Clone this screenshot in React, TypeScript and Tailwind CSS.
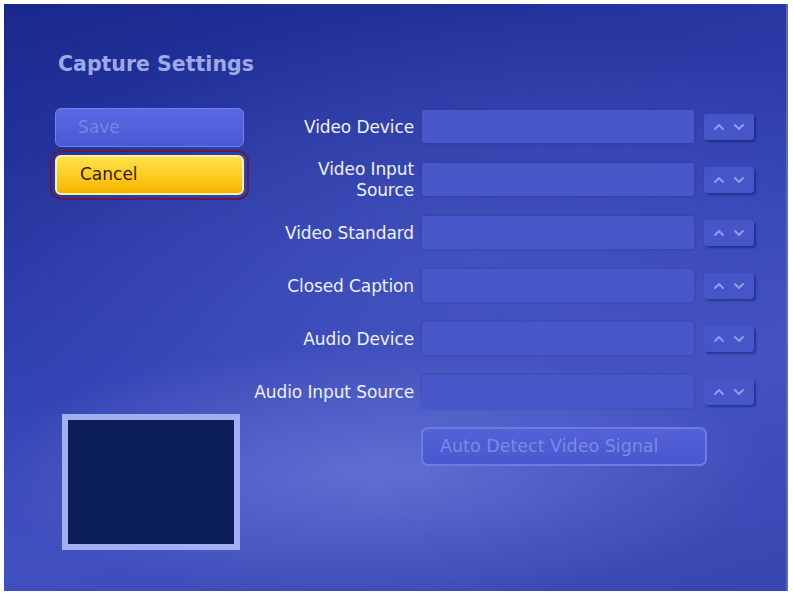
import { ChevronDown, ChevronUp } from "lucide-react";

const FONT = { fontFamily: '"DejaVu Sans", Verdana, sans-serif' } as const;

const ROWS: { label: string; twoLine?: boolean }[] = [
  { label: "Video Device" },
  { label: "Video Input Source", twoLine: true },
  { label: "Video Standard" },
  { label: "Closed Caption" },
  { label: "Audio Device" },
  { label: "Audio Input Source" },
];

function Spinner() {
  return (
    <div className="flex h-[26px] w-[50px] items-center justify-center gap-[4px] rounded-[3px] bg-[#4656c8] shadow-[2px_2px_2px_rgba(20,30,110,0.55)]">
      <ChevronUp className="size-[16px] text-[#8e9cec]" strokeWidth={3} />
      <ChevronDown className="size-[16px] text-[#8e9cec]" strokeWidth={3} />
    </div>
  );
}

function SettingRow({ label, twoLine }: { label: string; twoLine?: boolean }) {
  return (
    <div className="flex h-[33px] items-center">
      <div
        className={
          twoLine
            ? "w-[174px] pr-[8px] text-right text-[17px] leading-[21px] tracking-[-0.1px] text-[#eef0ff]"
            : "w-[174px] pr-[8px] text-right text-[17px] leading-[20px] tracking-[-0.1px] text-[#eef0ff]"
        }
      >
        {twoLine ? (
          <>
            Video Input
            <br />
            Source
          </>
        ) : (
          label
        )}
      </div>
      <div className="h-[33px] w-[272px] rounded-[3px] bg-[#4858c8] shadow-[0_0_3px_rgba(40,50,150,0.5)]" />
      <div className="ml-[10px]">
        <Spinner />
      </div>
    </div>
  );
}

export default function App() {
  return (
    <div className="h-[596px] w-[793px] bg-white pl-[4px] pt-[4px]" style={FONT}>
      <div className="h-[587px] w-[784px] overflow-hidden border-r-2 border-[#5868c8] bg-[radial-gradient(ellipse_50%_22%_at_48%_80%,rgba(120,135,225,0.55),transparent),radial-gradient(ellipse_60%_45%_at_60%_45%,rgba(80,96,200,0.5),transparent),linear-gradient(165deg,#1a288c_0%,#25349e_22%,#3444b4_50%,#4150bf_70%,#3746b0_100%)]">
        <h1 className="ml-[54px] mt-[46px] text-[20.5px] font-bold leading-[28px] text-[#9ea9ea]">
          Capture Settings
        </h1>

        <div className="mt-[30px] flex">
          {/* left column: buttons + preview */}
          <div className="ml-[51px] flex w-[189px] flex-col">
            <div className="flex h-[39px] items-center rounded-[6px] border border-[#7282ea] bg-[linear-gradient(#5a68e2,#4a58d4)] pl-[22px] text-[17px] text-[#7686e6]">
              Save
            </div>
            <div className="mt-[8px] flex h-[40px] items-center rounded-[6px] border-2 border-[#fff0a8] bg-[linear-gradient(#ffe24a,#ffc81a_60%,#f4b400)] pl-[23px] text-[17px] text-[#2e1c08] outline-2 outline-offset-[3px] outline-[#5e1c4a] [outline-style:solid]">
              Cancel
            </div>
            <div className="ml-[7px] mt-[219px] h-[136px] w-[178px] border-[6px] border-[#a2b0f2] bg-[#0c1e58]" />
          </div>

          {/* right column: settings rows */}
          <div className="ml-[4px] mt-[2px] flex flex-col gap-[20px]">
            {ROWS.map((r) => (
              <SettingRow key={r.label} label={r.label} twoLine={r.twoLine} />
            ))}
            <div className="ml-[173px] mt-[-1px] flex h-[39px] w-[286px] items-center rounded-[7px] border-2 border-[#6c7ce2] bg-[linear-gradient(#5462d8,#4a58cf)] pl-[17px] text-[17.5px] text-[#7a8ae4]">
              Auto Detect Video Signal
            </div>
          </div>
        </div>
      </div>
    </div>
  );
}
